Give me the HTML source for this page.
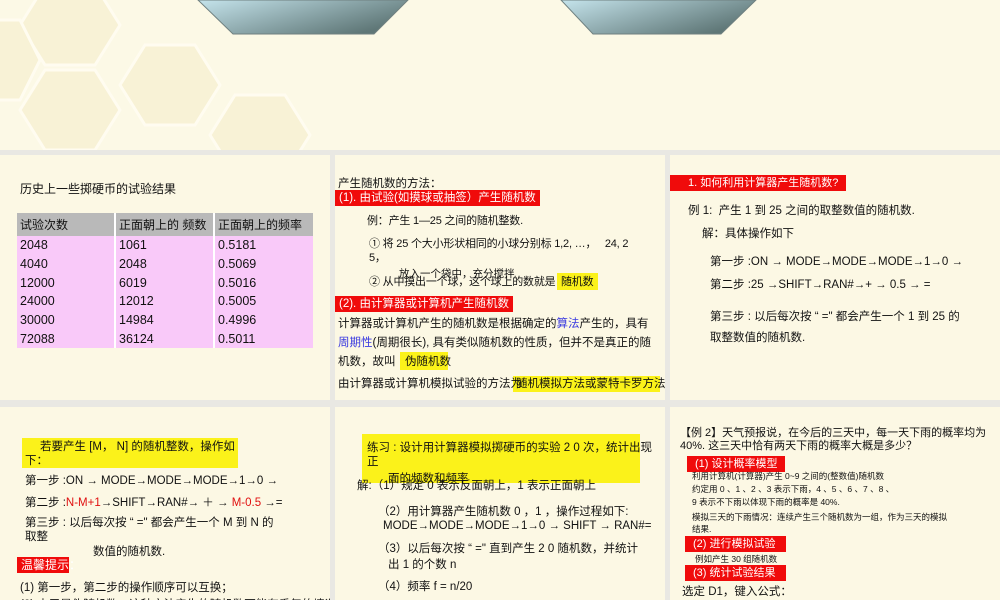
<!DOCTYPE html>
<html><head><meta charset="utf-8"><style>
*{margin:0;padding:0;box-sizing:border-box}
body{width:1000px;height:600px;position:relative;overflow:hidden;background:#e9e8e3;font-family:"Liberation Sans","Noto Sans CJK SC",sans-serif;color:#111}
.p{position:absolute;background:#fcf8e4;overflow:hidden}
.t{position:absolute;white-space:nowrap;font-size:11.5px;line-height:14px}
.r{position:absolute;background:#f00b0b;color:#fff;font-size:12px;line-height:16px;padding:0 4px;white-space:nowrap}
.y{position:absolute;background:#fbf21a}
.hx{position:absolute;pointer-events:none}
table{position:absolute;border-collapse:collapse;font-size:12.5px}
td{border-left:2px solid #fff;padding-left:3px;height:18.7px;background:#f9c9f9}
td:first-child{border-left:none}
tr.h td{background:#b9b9b9;height:23px;font-size:12px}
.blue{color:#3a3ae0}.red{color:#e01010}
.s{font-size:11px;letter-spacing:-0.2px}
.w{font-size:11.5px;letter-spacing:0}
</style></head><body>
<div class="p" style="left:0;top:0;width:1000px;height:150px;background:#fcf9e6">
<svg class="hx" width="1000" height="150"><g fill="#f8f2d6" stroke="#fffcf0" stroke-width="3">
<polygon points="20,25 45,-15 95,-15 120,25 95,65 45,65"/><polygon points="120,85 145,45 195,45 220,85 195,125 145,125"/><polygon points="20,110 45,70 95,70 120,110 95,150 45,150"/><polygon points="210,135 235,95 285,95 310,135 285,175 235,175"/><polygon points="-40,60 -15,20 20,20 40,60 20,100 -15,100"/></g></svg>
<svg style="position:absolute;left:0;top:0" width="1000" height="40"><defs><linearGradient id="g" x1="0" y1="0" x2="1" y2="0.6"><stop offset="0" stop-color="#c5e4ec"/><stop offset="1" stop-color="#5f7777"/></linearGradient></defs>
<polygon points="198,0 408,0 374,34 233,34" fill="url(#g)" stroke="#6f8080"/>
<polygon points="561,0 756,0 721,34 593,34" fill="url(#g)" stroke="#6f8080"/></svg>
</div>

<div class="p" style="left:0;top:155px;width:330px;height:245px">
<div class="t" style="left:20px;top:27px;font-size:12px">历史上一些掷硬币的试验结果</div>
<table style="left:17px;top:58px;width:296px">
<tr class="h"><td style="width:98px">试验次数</td><td style="width:99px">正面朝上的 频数</td><td>正面朝上的频率</td></tr>
<tr><td>2048</td><td>1061</td><td>0.5181</td></tr>
<tr><td>4040</td><td>2048</td><td>0.5069</td></tr>
<tr><td>12000</td><td>6019</td><td>0.5016</td></tr>
<tr><td>24000</td><td>12012</td><td>0.5005</td></tr>
<tr><td>30000</td><td>14984</td><td>0.4996</td></tr>
<tr><td>72088</td><td>36124</td><td>0.5011</td></tr>
</table>
</div>

<div class="p" style="left:335px;top:155px;width:330px;height:245px">
<div class="t" style="left:3px;top:22px">产生随机数的方法：</div>
<div class="r" style="left:0;top:35px;font-size:11.5px">(1). 由试验(如摸球或抽签）产生随机数</div>
<div class="t s" style="left:32px;top:59px">例：产生 1—25 之间的随机整数.</div>
<div class="t s" style="left:34px;top:82px">① 将 25 个大小形状相同的小球分别标 1,2, …，&nbsp;&nbsp;&nbsp;24, 2</div>
<div class="t s" style="left:34px;top:96px">5，</div>
<div class="t" style="left:64px;top:112px;font-size:10.5px">放入一个袋中，充分搅拌</div>
<div class="y" style="left:222px;top:118px;width:41px;height:17px"></div>
<div class="t s" style="left:34px;top:120px">② 从中摸出一个球，这个球上的数就是 </div>
<div class="t s" style="left:226px;top:120px">随机数</div>
<div class="r" style="left:0;top:141px;font-size:11.5px">(2). 由计算器或计算机产生随机数</div>
<div class="t w" style="left:3px;top:162px">计算器或计算机产生的随机数是根据确定的<span class="blue">算法</span>产生的，具有</div>
<div class="t w" style="left:3px;top:181px"><span class="blue">周期性</span>(周期很长), 具有类似随机数的性质，但并不是真正的随</div>
<div class="y" style="left:65px;top:197px;width:48px;height:18px"></div>
<div class="t w" style="left:3px;top:200px">机数，故叫</div>
<div class="t w" style="left:70px;top:200px">伪随机数</div>
<div class="y" style="left:178px;top:221px;width:147px;height:16px"></div>
<div class="t w" style="left:3px;top:222px">由计算器或计算机模拟试验的方法为</div>
<div class="t w" style="left:181px;top:222px">随机模拟方法或蒙特卡罗方法</div>
</div>

<div class="p" style="left:670px;top:155px;width:330px;height:245px">
<div class="r" style="left:0;top:20px;width:176px;padding-left:18px;font-size:11px">1. 如何利用计算器产生随机数?</div>
<div class="t w" style="left:18px;top:49px">例 1:&nbsp; 产生 1 到 25 之间的取整数值的随机数.</div>
<div class="t w" style="left:32px;top:72px">解：具体操作如下</div>
<div class="t w" style="left:40px;top:100px">第一步 :ON → MODE→MODE→MODE→1→0 →</div>
<div class="t w" style="left:40px;top:123px">第二步 :25 →SHIFT→RAN#→+ → 0.5 → =</div>
<div class="t w" style="left:40px;top:155px">第三步 : 以后每次按 “ =" 都会产生一个 1 到 25 的</div>
<div class="t w" style="left:40px;top:176px">取整数值的随机数.</div>
</div>

<div class="p" style="left:0;top:407px;width:330px;height:193px">
<div class="y" style="left:22px;top:31px;width:216px;height:30px"></div>
<div class="t w" style="left:40px;top:33px">若要产生 [M， N] 的随机整数，操作如</div>
<div class="t w" style="left:25px;top:47px">下：</div>
<div class="t w" style="left:25px;top:67px">第一步 :ON → MODE→MODE→MODE→1→0 →</div>
<div class="t w" style="left:25px;top:89px">第二步 :<span class="red">N-M+1</span>→SHIFT→RAN#→ ＋ → <span class="red">M-0.5</span> →=</div>
<div class="t w" style="left:25px;top:109px">第三步 : 以后每次按 “ =" 都会产生一个 M 到 N 的</div>
<div class="t w" style="left:25px;top:123px">取整</div>
<div class="t w" style="left:93px;top:138px">数值的随机数.</div>
<div class="r" style="left:17px;top:150px;width:52px">温馨提示：</div>
<div class="t w" style="left:20px;top:174px">(1) 第一步，第二步的操作顺序可以互换；</div>
<div class="t w" style="left:20px;top:191px">(2) 由于是伪随机数，这种方法产生的随机数可能有重复的情况</div>
</div>

<div class="p" style="left:335px;top:407px;width:330px;height:193px">
<div class="y" style="left:27px;top:27px;width:278px;height:49px"></div>
<div class="t w" style="left:32px;top:34px">练习 : 设计用计算器模拟掷硬币的实验 2 0 次，统计出现</div>
<div class="t w" style="left:32px;top:48px">正</div>
<div class="t w" style="left:53px;top:65px">面的频数和频率</div>
<div class="t w" style="left:22px;top:72px">解:（1）规定 0 表示反面朝上，1 表示正面朝上</div>
<div class="t w" style="left:43px;top:98px">（2）用计算器产生随机数 0 ，1 ，操作过程如下:</div>
<div class="t w" style="left:48px;top:112px">MODE→MODE→MODE→1→0 → SHIFT → RAN#=</div>
<div class="t w" style="left:43px;top:135px">（3）以后每次按 “ =" 直到产生 2 0 随机数，并统计</div>
<div class="t w" style="left:53px;top:151px">出 1 的个数 n</div>
<div class="t w" style="left:43px;top:173px">（4）频率 f = n/20</div>
</div>

<div class="p" style="left:670px;top:407px;width:330px;height:193px">
<div class="t" style="left:10px;top:19px;font-size:11px">【例 2】天气预报说，在今后的三天中，每一天下雨的概率均为</div>
<div class="t" style="left:10px;top:32px;font-size:11px">40%. 这三天中恰有两天下雨的概率大概是多少？</div>
<div class="r" style="left:17px;top:49px;width:98px;padding-left:8px;font-size:11px">(1) 设计概率模型</div>
<div class="t" style="left:22px;top:64px;font-size:8.5px;line-height:11px">利用计算机(计算器)产生 0~9 之间的(整数值)随机数</div>
<div class="t" style="left:22px;top:77px;font-size:8.5px;line-height:11px">约定用 0 、1 、2 、3 表示下雨，4 、5 、6 、7 、8 、</div>
<div class="t" style="left:22px;top:90px;font-size:8.5px;line-height:11px">9 表示不下雨以体现下雨的概率是 40%.</div>
<div class="t" style="left:22px;top:105px;font-size:8.5px;line-height:11px">模拟三天的下雨情况：连续产生三个随机数为一组，作为三天的模拟</div>
<div class="t" style="left:22px;top:117px;font-size:8.5px;line-height:11px">结果.</div>
<div class="r" style="left:15px;top:129px;width:101px;padding-left:8px;font-size:11px">(2) 进行模拟试验</div>
<div class="t" style="left:25px;top:147px;font-size:8.5px;line-height:11px">例如产生 30 组随机数</div>
<div class="r" style="left:15px;top:158px;width:101px;padding-left:8px;font-size:11px">(3) 统计试验结果</div>
<div class="t w" style="left:12px;top:178px">选定 D1，键入公式：</div>
</div>
</body></html>
